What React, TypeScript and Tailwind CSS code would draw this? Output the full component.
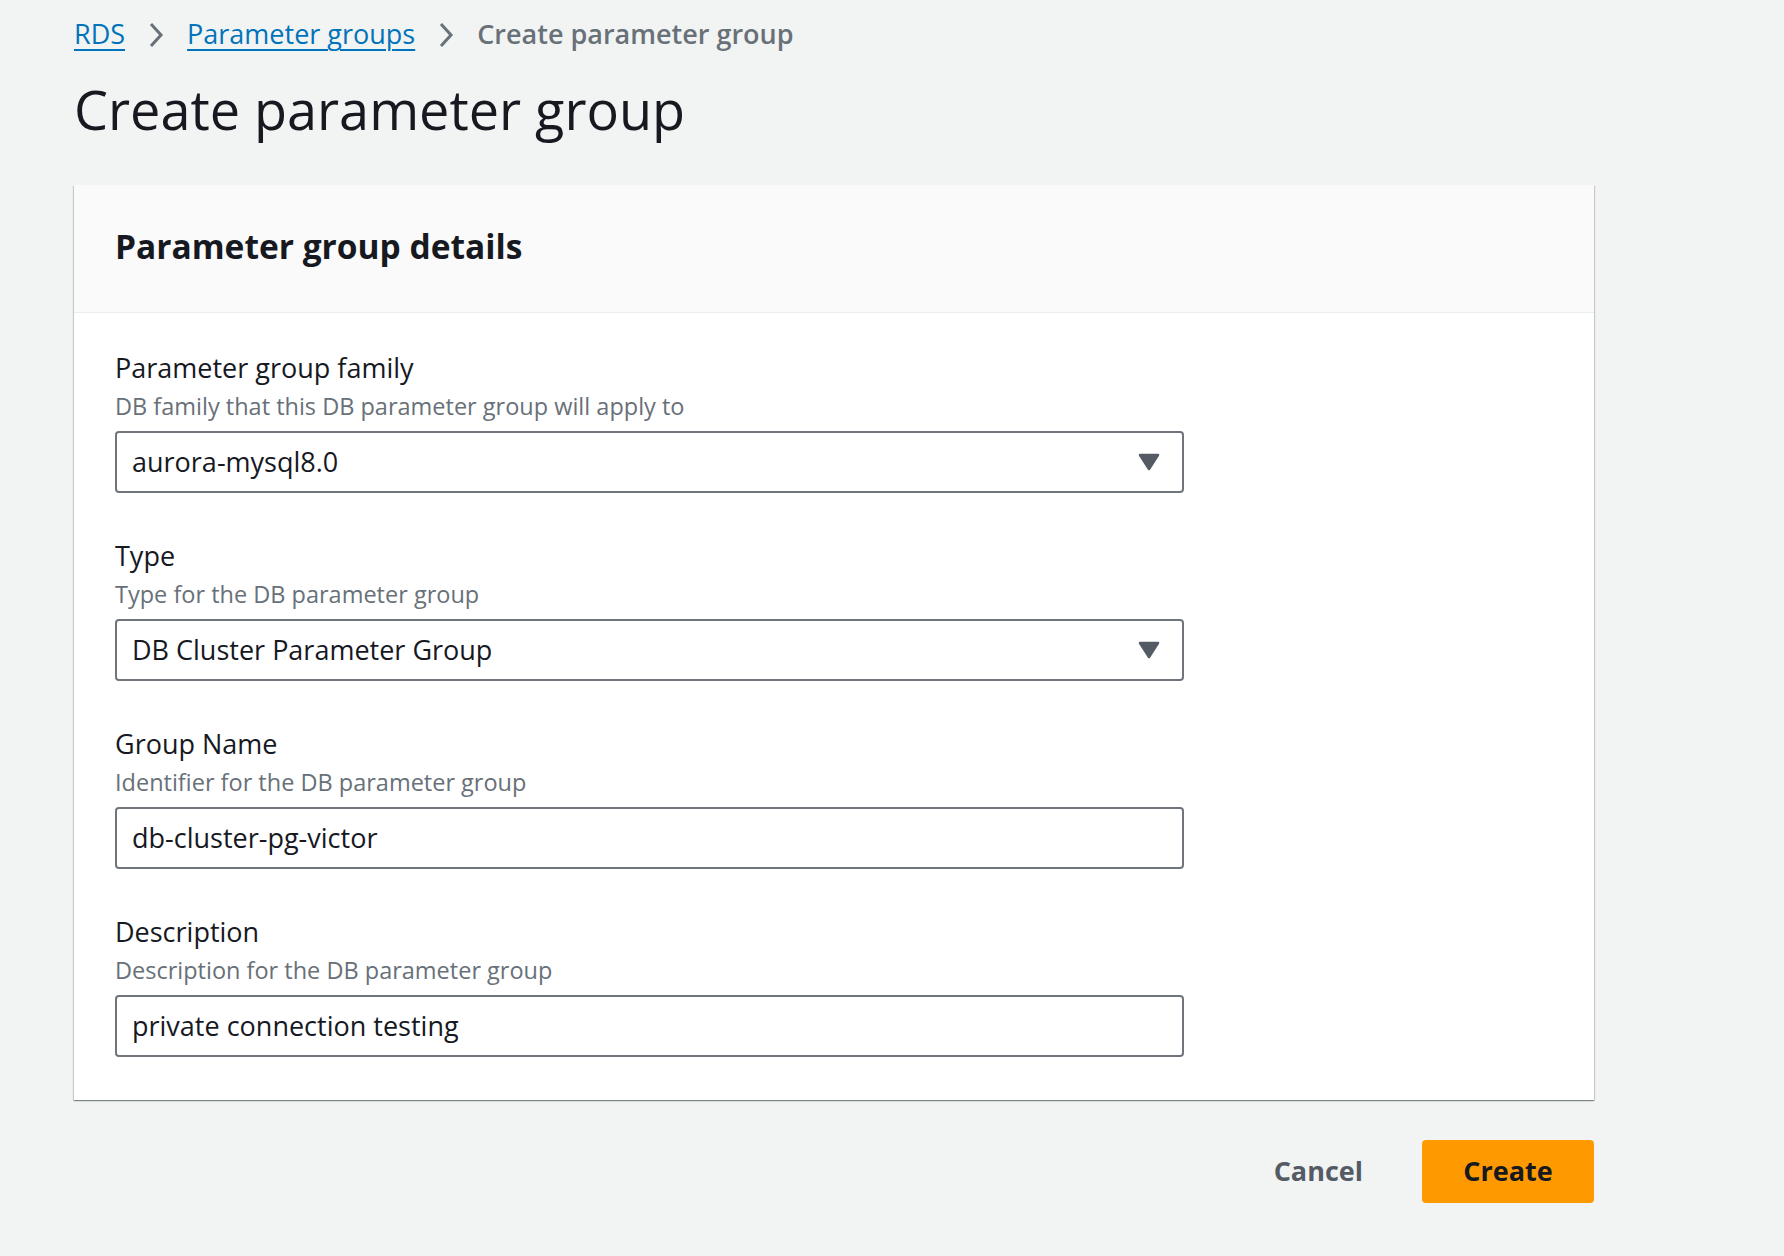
import React from "react";

const font = { fontFamily: '"Open Sans", "Noto Sans", sans-serif' };

function Caret() {
  return (
    <svg width="22" height="18" viewBox="0 0 22 18" className="absolute right-[22px] top-1/2 -translate-y-1/2">
      <path d="M2 2 L20 2 L11 16 Z" fill="#545b64" stroke="#545b64" strokeWidth="2.5" strokeLinejoin="round" />
    </svg>
  );
}

function Field({ label, desc, value, select }: { label: string; desc: string; value: string; select?: boolean }) {
  return (
    <div className="flex flex-col">
      <div className="text-[27px] leading-[36px] text-[#16191f]">{label}</div>
      <div className="mt-[4px] text-[23.5px] leading-[32px] text-[#687078]">{desc}</div>
      <div className="relative mt-[9px] h-[62px] w-[1069px] rounded-[4px] border-2 border-[#6f757b] bg-white flex items-center pl-[15px]">
        <span className="text-[27px] text-[#16191f]">{value}</span>
        {select && <Caret />}
      </div>
    </div>
  );
}

export default function App() {
  return (
    <div className="min-h-[1256px] w-full bg-[#f2f3f3] pl-[74px] pr-[190px]" style={font}>
      <div className="flex items-center h-[69px] text-[27px]">
        <a className="text-[#0073bb] underline underline-offset-[5px] decoration-[2px]">RDS</a>
        <svg width="18" height="30" viewBox="0 0 18 30" className="mx-[22px]">
          <path d="M4 4 L14 15 L4 26" fill="none" stroke="#687078" strokeWidth="3" />
        </svg>
        <a className="text-[#0073bb] underline underline-offset-[5px] decoration-[2px]">Parameter groups</a>
        <svg width="18" height="30" viewBox="0 0 18 30" className="mx-[22px]">
          <path d="M4 4 L14 15 L4 26" fill="none" stroke="#687078" strokeWidth="3" />
        </svg>
        <span className="text-[#687078] font-semibold">Create parameter group</span>
      </div>
      <h1 className="h-[80px] flex items-center text-[54px] text-[#16191f] font-normal">Create parameter group</h1>
      <div className="mt-[36px] w-[1520px] bg-white shadow-[0_1px_1px_0_rgba(0,28,36,0.3),1px_1px_1px_0_rgba(0,28,36,0.15),-1px_1px_1px_0_rgba(0,28,36,0.15)]">
        <div className="h-[128px] bg-[#fafafa] border-b border-[#eaeded] flex items-center pl-[41px] pb-[4px]">
          <h2 className="text-[33.5px] font-bold text-[#16191f]">Parameter group details</h2>
        </div>
        <div className="pl-[41px] pt-[37px] pb-[43px] flex flex-col gap-[45px]">
          <Field label="Parameter group family" desc="DB family that this DB parameter group will apply to" value="aurora-mysql8.0" select />
          <Field label="Type" desc="Type for the DB parameter group" value="DB Cluster Parameter Group" select />
          <Field label="Group Name" desc="Identifier for the DB parameter group" value="db-cluster-pg-victor" />
          <Field label="Description" desc="Description for the DB parameter group" value="private connection testing" />
        </div>
      </div>
      <div className="w-[1520px] mt-[40px] flex justify-end items-center">
        <button className="px-[40px] h-[63px] text-[27px] font-bold text-[#545b64]">Cancel</button>
        <button className="ml-[19px] w-[172px] h-[63px] rounded-[4px] bg-[#ff9900] text-[27px] font-bold text-[#16191f]">Create</button>
      </div>
    </div>
  );
}
